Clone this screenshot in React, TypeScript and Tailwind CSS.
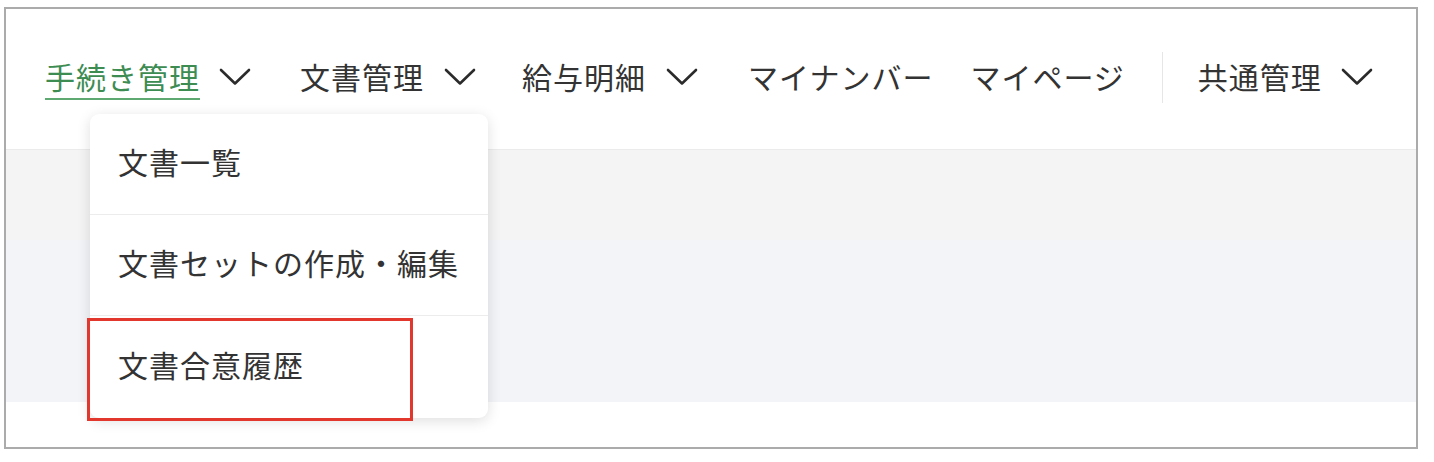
import React from "react";

function Chevron() {
  return (
    <svg width="32" height="18" viewBox="0 0 32 18" fill="none" className="shrink-0">
      <path d="M2 2 L16 15.5 L30 2" stroke="#2b2b2b" strokeWidth="2.6" strokeLinecap="round" strokeLinejoin="round" />
    </svg>
  );
}

export default function App() {
  const font = { fontFamily: '"Noto Sans CJK JP", "Noto Sans", sans-serif' };
  return (
    <div className="w-[1434px] h-[462px] bg-white pl-[4px] pt-[7px]" style={font}>
      <div className="relative w-[1414px] h-[442px] border-2 border-[#ababab] flex flex-col bg-white">
        {/* header */}
        <div className="h-[141px] shrink-0 border-b border-[#ebebeb] flex items-center pl-[39px] pb-[6px] text-[30px] leading-none text-[#333] tracking-[1px]">
          <div className="flex items-center">
            <span className="relative text-[#3d8c52]">
              手続き管理
              <span className="absolute left-0 right-0 -bottom-[9px] h-[2px] bg-[#5ea872]" />
            </span>
            <span className="ml-[19px] mt-[2px]"><Chevron /></span>
          </div>
          <div className="flex items-center ml-[49px]">
            <span>文書管理</span>
            <span className="ml-[20px] mt-[2px]"><Chevron /></span>
          </div>
          <div className="flex items-center ml-[46px]">
            <span>給与明細</span>
            <span className="ml-[20px] mt-[2px]"><Chevron /></span>
          </div>
          <span className="ml-[50px]">マイナンバー</span>
          <span className="ml-[37px]">マイページ</span>
          <div className="ml-[37px] w-px h-[51px] bg-[#e6e6e6] mt-[2px]" />
          <div className="flex items-center ml-[35px]">
            <span>共通管理</span>
            <span className="ml-[19px] mt-[2px]"><Chevron /></span>
          </div>
        </div>
        <div className="h-[90px] shrink-0 bg-[#f4f4f4]" />
        <div className="h-[162px] shrink-0 bg-[#f3f4f8]" />
        <div className="flex-1 bg-white" />

        {/* dropdown */}
        <div className="absolute left-[84px] top-[105px] w-[398px] bg-white rounded-[9px] shadow-[0_3px_14px_rgba(0,0,0,0.13)] text-[30px] leading-none text-[#333] tracking-[1px]">
          <div className="h-[101px] flex items-center pl-[28px] pb-[6px] border-b border-[#ececec]">文書一覧</div>
          <div className="h-[101px] flex items-center pl-[28px] pb-[6px] border-b border-[#ececec]">文書セットの作成・編集</div>
          <div className="relative h-[102px] flex items-center pl-[28px] pb-[6px]">
            文書合意履歴
            <div className="absolute left-[-3px] top-[2px] w-[326px] h-[103px] border-[3px] border-[#e2372c]" />
          </div>
        </div>
      </div>
    </div>
  );
}
